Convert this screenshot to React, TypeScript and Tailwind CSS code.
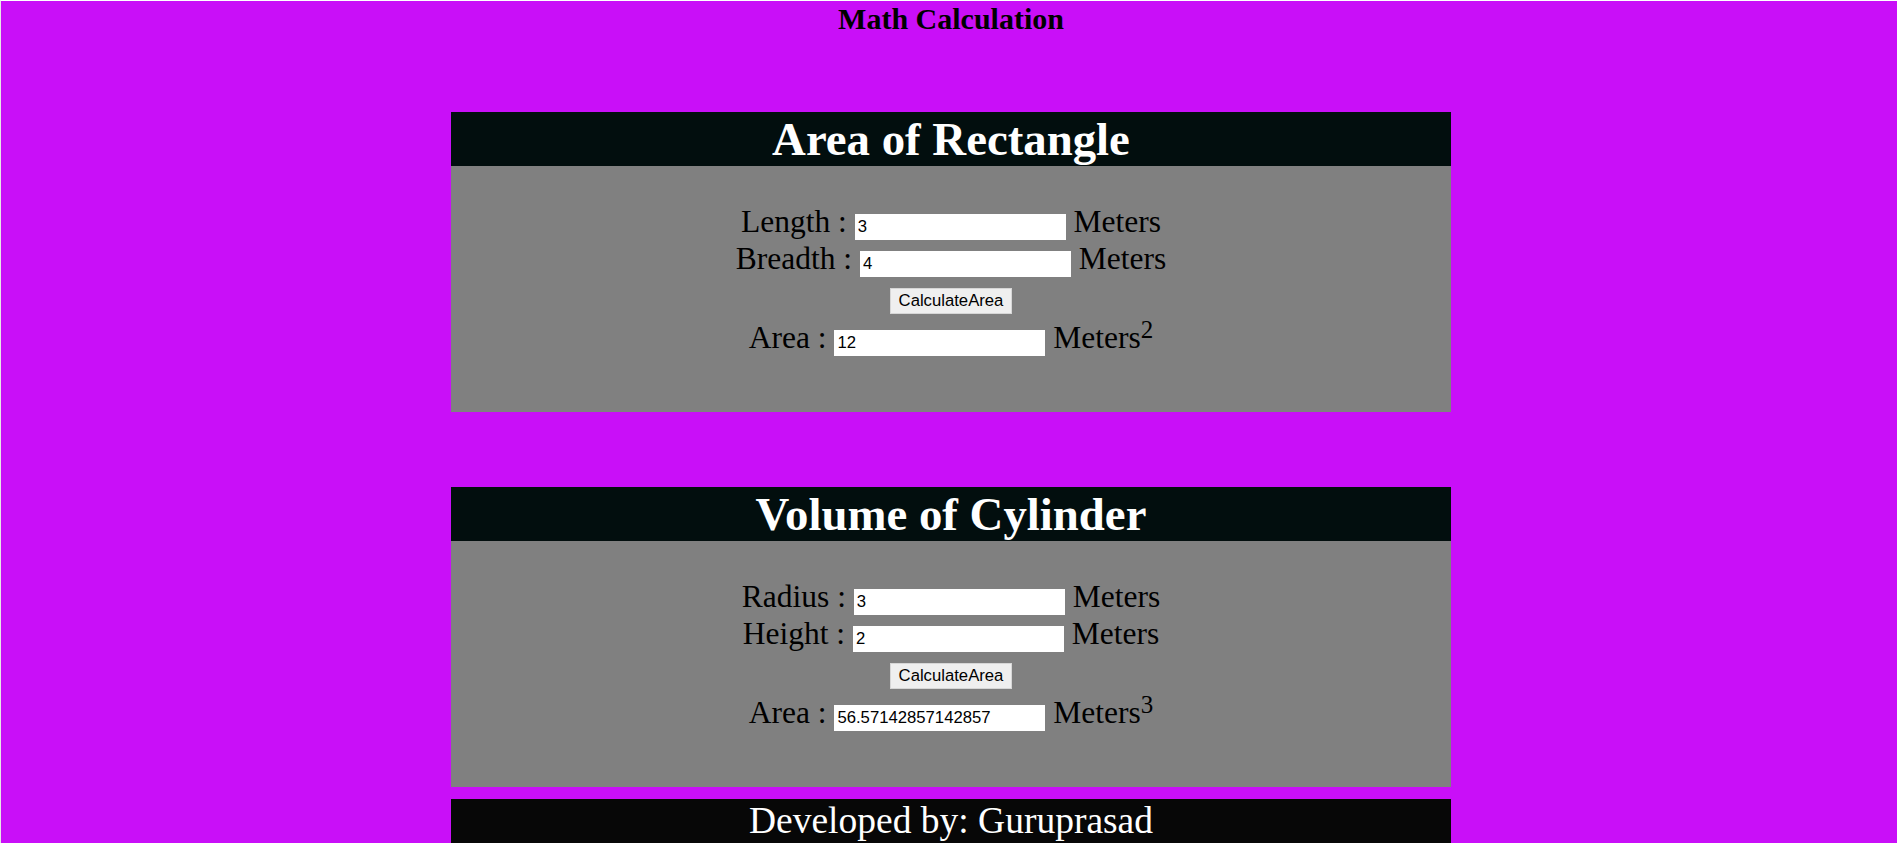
import React from "react";

type RowProps = { label: string; value: string; sup?: string; h: string };

function Row({ label, value, sup, h }: RowProps) {
  return (
    <div className={`flex justify-center items-baseline ${h}`}>
      <span>{label + "\u00a0"}</span>
      <input
        readOnly
        value={value}
        className="w-[211px] h-[26px] bg-white border-0 px-[3px] text-[16.7px] text-black outline-none font-['Liberation_Sans',Arial,sans-serif]"
      />
      <span>
        {"\u00a0Meters"}
        {sup && <span className="relative top-[-10px] text-[25px] leading-none">{sup}</span>}
      </span>
    </div>
  );
}

type PanelProps = {
  title: string;
  rows: { label: string; value: string }[];
  result: string;
  power: string;
  top: string;
};

function Panel({ title, rows, result, power, top }: PanelProps) {
  return (
    <div className={`w-[1000px] ${top}`}>
      <h1 className="h-[54px] bg-[#020e0e] text-white text-center text-[46.8px] leading-[55px] font-bold">
        {title}
      </h1>
      <div className="h-[246px] bg-[#808080] pt-[41px] text-[31.5px] leading-[29px] text-black">
        <Row label={rows[0].label} value={rows[0].value} h="h-[37px]" />
        <Row label={rows[1].label} value={rows[1].value} h="h-[44px]" />
        <div className="h-[35px] flex justify-center items-start">
          <button className="w-[122px] h-[26px] bg-[#efefef] border border-[#d6d6d6] text-[16.7px] leading-none text-black font-['Liberation_Sans',Arial,sans-serif]">
            CalculateArea
          </button>
        </div>
        <Row label="Area :" value={result} sup={power} h="h-[37px]" />
      </div>
    </div>
  );
}

export default function App() {
  return (
    <div className="h-[843px] overflow-hidden bg-[#c90ff8] border-t border-l border-t-white border-l-[#e6e6e6] font-['Liberation_Serif','Times_New_Roman',serif] text-black">
      <h2 className="pt-[1px] pl-[4px] text-center text-[30px] leading-[34px] font-bold">
        Math Calculation
      </h2>
      <div className="pl-[4px] flex flex-col items-center">
        <Panel
          top="mt-[76px]"
          title="Area of Rectangle"
          rows={[
            { label: "Length :", value: "3" },
            { label: "Breadth :", value: "4" },
          ]}
          result="12"
          power="2"
        />
        <Panel
          top="mt-[75px]"
          title="Volume of Cylinder"
          rows={[
            { label: "Radius :", value: "3" },
            { label: "Height :", value: "2" },
          ]}
          result="56.57142857142857"
          power="3"
        />
        <div className="mt-[12px] w-[1000px] h-[44px] bg-[#070707] text-white text-center text-[37.5px] leading-[44px]">
          Developed by: Guruprasad
        </div>
      </div>
    </div>
  );
}
